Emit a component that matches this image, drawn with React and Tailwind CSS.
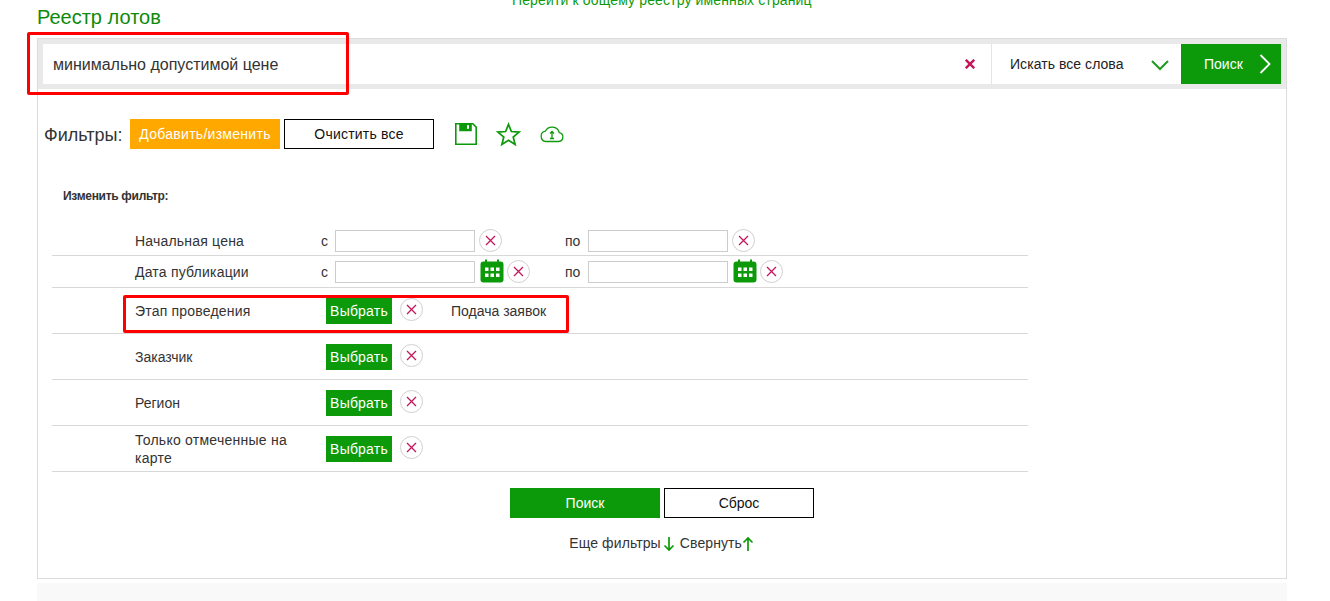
import React from "react";

const GREEN = "bg-[#0d9a0a]";

function CrossCircle() {
  return (
    <span className="flex h-[23px] w-[23px] shrink-0 items-center justify-center rounded-full border border-[#cfcfcf] bg-white">
      <svg width="11" height="11" viewBox="0 0 11 11" fill="none" stroke="#c2185b" strokeWidth="1.3">
        <path d="M1 1l9 9M10 1l-9 9" />
      </svg>
    </span>
  );
}

function Calendar() {
  return (
    <svg width="24" height="24" viewBox="0 0 24 24" className="-mt-[2px] shrink-0">
      <rect x="0.5" y="2.5" width="23" height="21" rx="3" fill="#0d9a0a" />
      <rect x="5" y="0.5" width="2" height="4" fill="#0d9a0a" />
      <rect x="17" y="0.5" width="2" height="4" fill="#0d9a0a" />
      {[5, 10.5, 16].map((x) =>
        [8.5, 14.5].map((y) => <rect key={x + "-" + y} x={x} y={y} width="3.5" height="3.5" fill="#fff" />)
      )}
    </svg>
  );
}

function RangeRow({ label, calendar, className }) {
  return (
    <div className={"flex items-center border-b border-[#d8d8d8] pl-[83px] " + className}>
      <div className="w-[186px] pt-[2px] text-[14px] tracking-[0.2px] text-[#333]">{label}</div>
      <div className="w-[14px] pt-[2px] text-[14px] text-[#333]">с</div>
      <input className="h-[22px] w-[140px] border border-[#ccc] bg-white" />
      <div className={"flex items-center " + (calendar ? "ml-[5px] w-[85px] gap-[3px]" : "ml-[4px] w-[86px]")}>
        {calendar && <Calendar />}
        <CrossCircle />
      </div>
      <div className="w-[23px] pt-[2px] text-[14px] text-[#333]">по</div>
      <input className="h-[22px] w-[140px] border border-[#ccc] bg-white" />
      <div className={"flex items-center " + (calendar ? "ml-[5px] gap-[3px]" : "ml-[4px]")}>
        {calendar && <Calendar />}
        <CrossCircle />
      </div>
    </div>
  );
}

function SelectRow({ label, value, labelClass = "" }) {
  return (
    <div className="flex h-[46px] items-center border-b border-[#d8d8d8] pl-[83px]">
      <div className={"w-[191px] pr-[30px] text-[14px] leading-[18px] text-[#333] " + labelClass}>{label}</div>
      <button className={"h-[26px] w-[66px] pt-[2px] text-[14px] tracking-[0.2px] text-white " + GREEN}>Выбрать</button>
      <div className="-mt-[2px] ml-[8px]">
        <CrossCircle />
      </div>
      {value && <div className="ml-[28px] pt-[2px] text-[14px] text-[#333]">{value}</div>}
    </div>
  );
}

export default function App() {
  return (
    <div className="relative h-[601px] overflow-hidden bg-white font-['Liberation_Sans',Arial,sans-serif]">
      {/* Header */}
      <div className="relative h-[38px] px-[37px]">
        <a className="absolute left-[512px] top-[-8px] text-[14px] leading-[16px] tracking-[0.13px] text-[#0d9a0a]">
          Перейти к общему реестру именных страниц
        </a>
        <h1 className="pt-[5px] text-[20px] leading-[24px] font-normal text-[#0d8a0a]">Реестр лотов</h1>
      </div>

      {/* Main panel */}
      <div className="mx-[37px] h-[541px] w-[1250px] border border-[#dcdcdc]">
        {/* Search bar */}
        <div className="flex h-[50px] border-[5px] border-[#e9e9e9] bg-white">
          <div className="flex flex-1 items-center justify-between pl-[10px] pr-[16px] text-[16px] text-[#333]">
            <span className="pt-[2px]">минимально допустимой цене</span>
            <svg width="10" height="10" viewBox="0 0 10 10" stroke="#c2185b" strokeWidth="2.4" fill="none">
              <path d="M0.8 0.8l8.4 8.4M9.2 0.8l-8.4 8.4" />
            </svg>
          </div>
          <div className="flex w-[190px] items-center justify-between border-l border-[#e4e4e4] pl-[18px] pr-[12px] text-[14px] tracking-[0.05px] text-[#222]">
            <span className="pt-[1px]">Искать все слова</span>
            <svg width="18" height="11" viewBox="0 0 18 11" fill="none" stroke="#1f9a1c" strokeWidth="2" className="mt-[2px]">
              <path d="M1 1l8 8 8-8" />
            </svg>
          </div>
          <button className={"flex h-[40px] w-[100px] items-center pl-[23px] pr-[10px] text-[14px] text-white " + GREEN}>
            <span className="flex-1 text-left">Поиск</span>
            <svg width="12" height="20" viewBox="0 0 12 20" fill="none" stroke="#fff" strokeWidth="1.8">
              <path d="M1.5 1l9 9-9 9" />
            </svg>
          </button>
        </div>

        {/* Filter toolbar */}
        <div className="mt-[30px] flex h-[30px] items-center pl-[6px]">
          <span className="w-[86px] pt-[2px] text-[18px] text-[#333]">Фильтры:</span>
          <button className="h-[30px] w-[150px] bg-[#ffa800] text-[14px] tracking-[0.28px] text-white">Добавить/изменить</button>
          <button className="ml-[4px] h-[30px] w-[150px] border border-black bg-white text-[14px] tracking-[0.2px] text-[#111]">
            Очистить все
          </button>
          <svg width="24" height="24" viewBox="0 0 24 24" className="ml-[20px]" fill="none" stroke="#0d9a0a" strokeWidth="1.6">
            <path d="M1.8 1.800h17l3.400 3.400v17H1.800z" />
            <path d="M6 1.800h11v6.700H6z" fill="#0d9a0a" />
            <rect x="13" y="3.200" width="2" height="3.600" fill="#fff" stroke="none" />
          </svg>
          <svg width="25" height="24" viewBox="0 0 26 24" className="ml-[18px]" fill="none" stroke="#0d9a0a" strokeWidth="1.8">
            <path d="M13 2l3 7.400 8 .6-6.100 5.100 2 7.800L13 18.600l-6.900 4.300 2-7.800L2 10l8-.6z" />
          </svg>
          <svg width="24" height="18" viewBox="0 0 24 18" className="ml-[19px]" fill="none" stroke="#0d9a0a" strokeWidth="1.3">
            <path d="M6 16.500h12.500a4.500 4.500 0 0 0 .8-8.900A7.500 7.500 0 0 0 5.400 6.200 5.200 5.200 0 0 0 6 16.500z" />
            <path d="M12 13.500V6.500M10 8.500l2-2 2 2M10 13.500h4" />
          </svg>
        </div>

        <div className="mt-[40px] pl-[25px] text-[12px] leading-[14px] font-bold tracking-[-0.3px] text-[#333]">Изменить фильтр:</div>

        {/* Filter table */}
        <div className="ml-[14px] mt-[21px] w-[976px]">
          <RangeRow label="Начальная цена" className="h-[32px] pt-[2px]" />
          <RangeRow label="Дата публикации" calendar className="h-[32px]" />
          <SelectRow label="Этап проведения" value="Подача заявок" labelClass="tracking-[0.2px]" />
          <SelectRow label="Заказчик" />
          <SelectRow label="Регион" />
          <SelectRow label="Только отмеченные на карте" labelClass="tracking-[0.25px]" />
        </div>

        {/* Actions */}
        <div className="mt-[16px] flex w-[776px] justify-end gap-[4px]">
          <button className={"h-[30px] w-[150px] text-[14px] text-white " + GREEN}>Поиск</button>
          <button className="h-[30px] w-[150px] border border-black bg-white text-[14px] text-[#111]">Сброс</button>
        </div>
        <div className="mt-[15px] flex w-[776px] items-center justify-end pr-[60px] text-[14px] tracking-[0.1px] text-[#333]">
          <span>Еще фильтры</span>
          <svg width="12" height="16" viewBox="0 0 12 16" fill="none" stroke="#0d9a0a" strokeWidth="1.7" className="ml-[2px]">
            <path d="M6 1v13M1.500 9.500L6 14l4.500-4.500" />
          </svg>
          <span className="ml-[5px]">Свернуть</span>
          <svg width="12" height="16" viewBox="0 0 12 16" fill="none" stroke="#0d9a0a" strokeWidth="1.7">
            <path d="M6 15V2M1.500 6.500L6 2l4.500 4.500" />
          </svg>
        </div>
      </div>

      {/* Next section strip */}
      <div className="mx-[37px] mt-[4px] h-[20px] w-[1250px] bg-[#f9f9f9]" />

      {/* Red annotation boxes drawn over the screenshot */}
      <div className="absolute left-[27px] top-[32px] h-[63px] w-[322px] rounded-[2px] border-[3px] border-[#f00]" />
      <div className="absolute left-[123px] top-[295px] h-[38px] w-[446px] rounded-[2px] border-[3px] border-[#f00]" />
    </div>
  );
}
